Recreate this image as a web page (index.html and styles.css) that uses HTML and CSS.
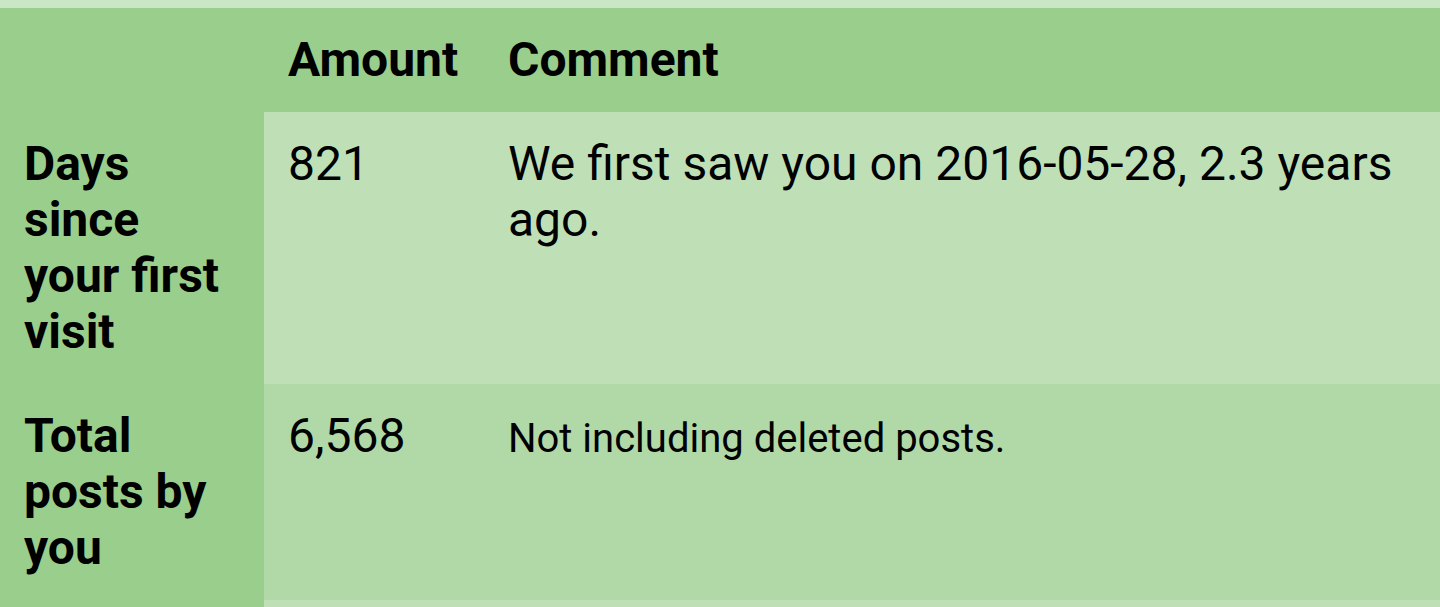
FILE: index.html
```html
<!DOCTYPE html>
<html lang="en">
<head>
<meta charset="utf-8">
<title>Stats</title>
<link rel="stylesheet" href="styles.css">
</head>
<body>
<div class="page">
  <table class="stats">
    <thead>
      <tr>
        <th class="corner"></th>
        <th class="col-amount">Amount</th>
        <th class="col-comment">Comment</th>
      </tr>
    </thead>
    <tbody>
      <tr class="row-light">
        <th>Days since your first visit</th>
        <td>821</td>
        <td>We first saw you on 2016-05-28, 2.3 years ago.</td>
      </tr>
      <tr class="row-mid">
        <th>Total posts by you</th>
        <td>6,568</td>
        <td><span class="note">Not including deleted posts.</span></td>
      </tr>
      <tr class="row-light row-next">
        <th></th>
        <td></td>
        <td></td>
      </tr>
    </tbody>
  </table>
</div>
</body>
</html>
```

FILE: styles.css
```css
html, body {
  margin: 0;
  padding: 0;
  background: #cbe6c4;
  overflow: hidden;
}

.page {
  padding-top: 8px;
  font-family: Roboto, "Liberation Sans", sans-serif;
  color: #000;
}

.stats {
  width: 100%;
  border-collapse: collapse;
  border-spacing: 0;
  table-layout: fixed;
  font-size: 48px;
  line-height: 56px;
}

.stats th,
.stats td {
  padding: 24px 25px 24px 24px;
  text-align: left;
  vertical-align: baseline;
}

.stats th {
  font-weight: 700;
  background: #99ce8c;
}

.corner { width: 215px; }
.col-amount { width: 171px; }

.stats td {
  font-weight: 400;
}

.row-light td { background: #bfe0b7; }
.row-mid td { background: #b1d9a8; }

.note {
  font-size: 40px;
}

.row-next th,
.row-next td {
  height: 56px;
}
```
